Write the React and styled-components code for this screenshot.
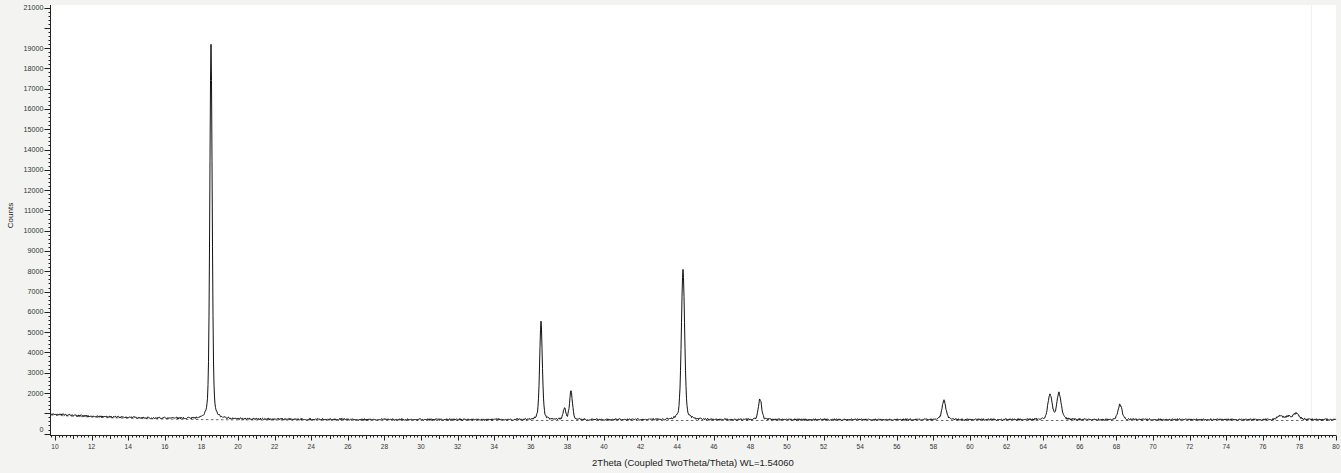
import React, { useMemo } from "react";
import styled, { createGlobalStyle } from "styled-components";

const GlobalStyle = createGlobalStyle`
  html, body {
    margin: 0;
    padding: 0;
    background: #f3f3f2;
  }
  body {
    font-family: "Liberation Sans", Arial, sans-serif;
  }
`;

// plot box in page pixels
const PLOT = { left: 50, top: 5, right: 1336, bottom: 435.5 };

// 2theta -> x, counts -> y
const xOf = (deg) => 55 + (deg - 10) * 18.3;
const yOf = (c) => 433.6 - c * 0.02029;

const Y_LABELS = [2000, 3000, 4000, 5000, 6000, 7000, 8000, 9000, 10000, 11000, 12000,
  13000, 14000, 15000, 16000, 17000, 18000, 19000, 21000];

// peaks: centre x, height px, fwhm px
const PEAKS = [
  { c: 211, h: 375, w: 2.8 },
  { c: 541, h: 97, w: 3.2 },
  { c: 564.5, h: 11, w: 3 },
  { c: 571, h: 28, w: 3.4 },
  { c: 683, h: 151, w: 3.8 },
  { c: 760, h: 21, w: 3.8 },
  { c: 944, h: 19, w: 4.6 },
  { c: 1050, h: 25, w: 5 },
  { c: 1059, h: 26, w: 5 },
  { c: 1120, h: 15, w: 4.8 },
  { c: 1280, h: 4, w: 6 },
  { c: 1288, h: 3, w: 6 },
  { c: 1296, h: 6, w: 7 },
];

const rng = (seed) => () => {
  seed = (seed + 0x6d2b79f5) | 0;
  let t = Math.imul(seed ^ (seed >>> 15), 1 | seed);
  t = (t + Math.imul(t ^ (t >>> 7), 61 | t)) ^ t;
  return ((t ^ (t >>> 14)) >>> 0) / 4294967296;
};

const base = (x) => 419.6 - 5.6 * Math.exp(-(x - 50) / 85);

const peakAt = (x) =>
  PEAKS.reduce((sum, p) => {
    const d = (x - p.c) / p.w;
    const lor = 1 / (1 + 4 * d * d);
    const gau = Math.exp(-4 * Math.LN2 * d * d);
    return sum + p.h * (0.35 * lor + 0.65 * gau);
  }, 0);

const buildCurve = () => {
  const r = rng(42);
  const pts = [];
  for (let x = PLOT.left + 1; x <= PLOT.right; x += 0.5) {
    const p = peakAt(x);
    const noise = (r() - 0.5) * 1.7 * (1 + Math.sqrt(p) * 0.08);
    pts.push(`${x.toFixed(1)},${(base(x) - p + noise).toFixed(2)}`);
  }
  return "M" + pts.join("L");
};

const buildBackground = () => {
  const pts = [];
  for (let x = PLOT.left + 1; x <= PLOT.right; x += 4) {
    pts.push(`${x},${(base(x) + 0.9).toFixed(2)}`);
  }
  return "M" + pts.join("L");
};

const Chart = () => {
  const curve = useMemo(buildCurve, []);
  const background = useMemo(buildBackground, []);

  const xTicks = [];
  for (let i = 49; i <= 400; i++) {
    const deg = i / 5;
    const x = xOf(deg);
    if (x < PLOT.left || x > PLOT.right) continue;
    const len = i % 10 === 0 ? 5 : i % 5 === 0 ? 3.5 : 2;
    xTicks.push({ x, len, label: i % 10 === 0 ? deg : null });
  }

  const yTicks = [];
  for (let c = 0; c <= 21000; c += 200) {
    const y = yOf(c);
    if (y < PLOT.top) continue;
    const len = c % 1000 === 0 ? 6 : c % 500 === 0 ? 4 : 2;
    yTicks.push({ y, len });
  }

  return (
    <Svg viewBox="22 5 1314 448" xmlns="http://www.w3.org/2000/svg">
      <rect
        x={PLOT.left}
        y={PLOT.top}
        width={PLOT.right - PLOT.left}
        height={PLOT.bottom - PLOT.top}
        fill="#ffffff"
      />
      <line x1="1311.5" y1={PLOT.top} x2="1311.5" y2={PLOT.bottom} stroke="#f0f0f0" />

      <path d={background} fill="none" stroke="#444" strokeWidth="0.8" strokeDasharray="2.5 2.5" />
      <path d={curve} fill="none" stroke="#111" strokeWidth="1" strokeLinejoin="round" />

      <g stroke="#222" strokeWidth="1">
        <line x1={PLOT.left + 0.5} y1={PLOT.top} x2={PLOT.left + 0.5} y2={PLOT.bottom} />
        <line x1={PLOT.left} y1={PLOT.bottom} x2={PLOT.right} y2={PLOT.bottom} />
        {yTicks.map((t) => (
          <line
            key={`y${t.y}`}
            x1={PLOT.left + 0.5 - t.len}
            y1={Math.round(t.y) + 0.5}
            x2={PLOT.left + 0.5}
            y2={Math.round(t.y) + 0.5}
          />
        ))}
        {xTicks.map((t) => (
          <line
            key={`x${t.x}`}
            x1={Math.round(t.x) + 0.5}
            y1={PLOT.bottom}
            x2={Math.round(t.x) + 0.5}
            y2={PLOT.bottom + t.len}
          />
        ))}
      </g>

      <g fill="#333" fontFamily="'Liberation Sans', Arial, sans-serif">
        {Y_LABELS.map((c) => (
          <text key={c} x="43.5" y={yOf(c) + 2.5} fontSize="7.2" textAnchor="end">
            {c}
          </text>
        ))}
        <text x="43.5" y="431.5" fontSize="7.2" textAnchor="end">
          0
        </text>
        {xTicks
          .filter((t) => t.label !== null)
          .map((t) => (
            <text key={t.label} x={t.x} y="449" fontSize="6.6" textAnchor="middle">
              {t.label}
            </text>
          ))}
      </g>
    </Svg>
  );
};

const App = () => {
  return (
    <>
      <GlobalStyle />
      <Page>
        <YTitle>
          <span>Counts</span>
        </YTitle>
        <Chart />
        <XTitle>2Theta (Coupled TwoTheta/Theta) WL=1.54060</XTitle>
      </Page>
    </>
  );
};

const Page = styled.div`
  width: 1341px;
  height: 473px;
  display: grid;
  grid-template-columns: 22px 28px 1286px 5px;
  grid-template-rows: 5px 431px 17px 20px;
  background: #f3f3f2;
  overflow: hidden;
`;

const Svg = styled.svg`
  grid-column: 2 / 4;
  grid-row: 2 / 4;
  width: 1314px;
  height: 448px;
  display: block;
  overflow: visible;
`;

const YTitle = styled.div`
  grid-column: 1;
  grid-row: 2;
  display: flex;
  align-items: center;
  justify-content: center;
  padding-bottom: 11px;

  span {
    transform: rotate(-90deg);
    white-space: nowrap;
    font-size: 8px;
    color: #222;
  }
`;

const XTitle = styled.div`
  grid-column: 3;
  grid-row: 4;
  text-align: center;
  font-size: 9.5px;
  line-height: 20px;
  color: #222;
`;

export default App;
